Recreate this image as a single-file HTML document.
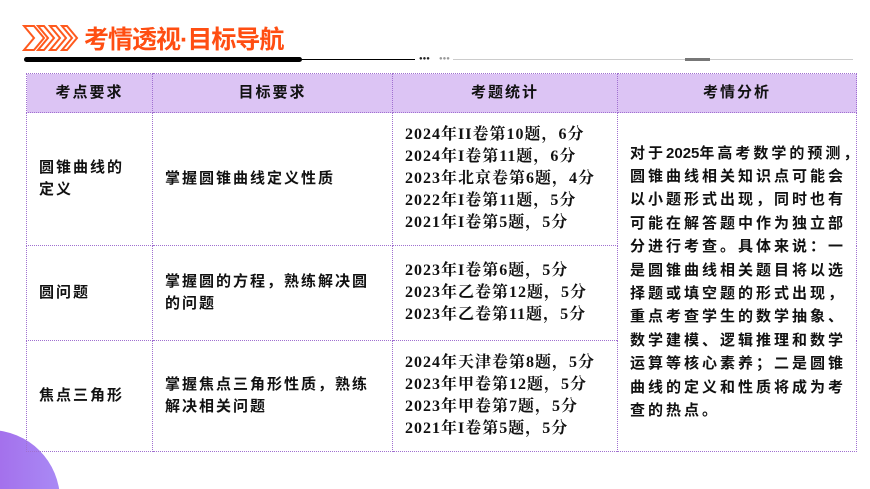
<!DOCTYPE html>
<html><head><meta charset="utf-8"><style>
html,body{margin:0;width:870px;height:489px;overflow:hidden}
body{background:#fff;position:relative;font-family:"Liberation Sans","Noto Sans CJK SC",sans-serif;}
.title{position:absolute;left:84px;top:25px;font-size:25px;font-weight:bold;color:#ff4e12;letter-spacing:-1px;line-height:30px;white-space:nowrap}
table{position:absolute;left:26px;top:73px;border-collapse:collapse;width:830px;table-layout:fixed}
td,th{border:1px dotted #a070d0;font-size:15px;font-weight:bold;color:#111;padding:0 0 0 12px;vertical-align:middle;line-height:22px;letter-spacing:2px;white-space:nowrap}
th{background:#dcc4f4;height:38px;text-align:center;padding:0}
.s{font-family:"Liberation Serif","Noto Serif CJK SC",serif;font-size:16px;letter-spacing:1px}
.a{line-height:23.4px;letter-spacing:3px;padding-left:12px}
.a b{letter-spacing:0}
.cw{position:absolute;left:0;top:430px;width:60px;height:59px;overflow:hidden}
.circ{position:absolute;left:-80px;top:0;width:140px;height:140px;border-radius:50%;background:linear-gradient(90deg,#9d4fe0,#a98af5)}
</style></head><body>
<svg style="position:absolute;left:22px;top:24px" width="60" height="28" viewBox="0 0 60 28">
<g fill="none" stroke="#ff5a1e" stroke-width="2">
<path d="M2 2h10l10 12-10 12H2l10-12z"/><path d="M16 2h6l10 12-10 12h-6l10-12z"/><path d="M28 2h6l10 12-10 12h-6l10-12z"/><path d="M40 2h5l10 12-10 12h-5l10-12z"/>
</g></svg>
<div class="title">考情透视·目标导航</div>
<div style="position:absolute;left:24px;top:57px;width:278px;height:5px;background:#000;border-radius:3px"></div>
<div style="position:absolute;left:300px;top:59px;width:115px;height:1px;background:#000"></div>
<div style="position:absolute;left:419px;top:58px;font-size:6px;line-height:3px;color:#222">●●●</div>
<div style="position:absolute;left:439px;top:58px;font-size:6px;line-height:3px;color:#999">●●●</div>
<div style="position:absolute;left:453px;top:59px;width:400px;height:1px;background:#ccc"></div>
<div style="position:absolute;left:685px;top:58px;width:25px;height:3px;background:#777"></div>
<div class="cw"><div class="circ"></div></div>
<table>
<colgroup><col style="width:126px"><col style="width:240px"><col style="width:225px"><col style="width:239px"></colgroup>
<tr><th>考点要求</th><th>目标要求</th><th>考题统计</th><th>考情分析</th></tr>
<tr style="height:133px"><td>圆锥曲线的<br>定义</td><td>掌握圆锥曲线定义性质</td><td class="s">2024年II卷第10题，6分<br>2024年I卷第11题，6分<br>2023年北京卷第6题，4分<br>2022年I卷第11题，5分<br>2021年I卷第5题，5分</td>
<td rowspan="3" class="a">对于<b>2025</b>年高考数学的预测，<br>圆锥曲线相关知识点可能会<br>以小题形式出现，同时也有<br>可能在解答题中作为独立部<br>分进行考查。具体来说：一<br>是圆锥曲线相关题目将以选<br>择题或填空题的形式出现，<br>重点考查学生的数学抽象、<br>数学建模、逻辑推理和数学<br>运算等核心素养；二是圆锥<br>曲线的定义和性质将成为考<br>查的热点。</td></tr>
<tr style="height:95px"><td>圆问题</td><td>掌握圆的方程，熟练解决圆<br>的问题</td><td class="s">2023年I卷第6题，5分<br>2023年乙卷第12题，5分<br>2023年乙卷第11题，5分</td></tr>
<tr style="height:111px"><td>焦点三角形</td><td>掌握焦点三角形性质，熟练<br>解决相关问题</td><td class="s">2024年天津卷第8题，5分<br>2023年甲卷第12题，5分<br>2023年甲卷第7题，5分<br>2021年I卷第5题，5分</td></tr>
</table>
</body></html>
